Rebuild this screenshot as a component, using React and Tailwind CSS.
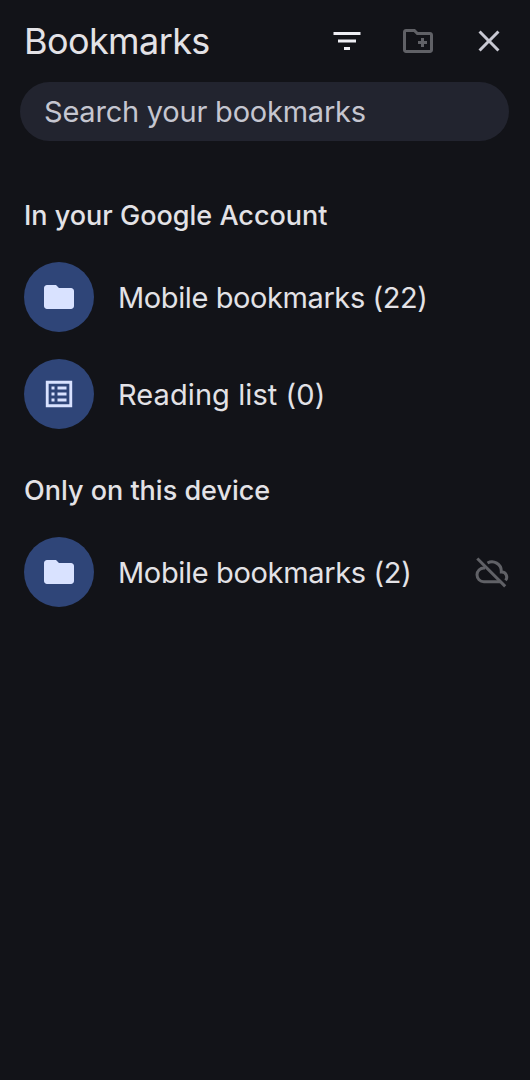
import { MdFilterList, MdOutlineCreateNewFolder, MdClose, MdFolder } from 'react-icons/md';

function ReadingListIcon() {
  return (
    <svg viewBox="0 0 24 24" className="w-9 h-9" fill="currentColor">
      <path fillRule="evenodd" d="M3.2 3.2h17.6v17.6H3.2zM5.1 5.1v13.8h13.8V5.1z" />
      <path d="M7 7h2v2H7zM11 7h6v2h-6zM7 11h2v2H7zM11 11h6v2h-6zM7 15h2v2H7zM11 15h6v2h-6z" />
    </svg>
  );
}

function CloudOffIcon() {
  return (
    <svg
      viewBox="0 0 24 24"
      className="w-9 h-9"
      fill="none"
      stroke="currentColor"
      strokeWidth="2"
    >
      <path d="M2.2 3L20.8 21.6" />
      <path d="M7.4 9.3H6.6A4.6 4.6 0 0 0 6.6 18.5H17.4" />
      <path d="M9 6A6.2 6.2 0 0 1 18.2 11.4V12H18.6A3.4 3.4 0 0 1 21 17.6" />
    </svg>
  );
}

function SectionHeader({ children }) {
  return (
    <h2 className="h-[81px] pt-8 pl-6 text-[27px] leading-[34px] font-medium text-[#e3e2e6] whitespace-nowrap">
      {children}
    </h2>
  );
}

function BookmarkRow({ icon, label, className, trailing }) {
  return (
    <div className="h-[97px] pl-6 pr-5 flex items-center">
      <div className="w-[70px] h-[70px] shrink-0 rounded-full bg-[#2f4578] text-[#d9e2ff] flex items-center justify-center">
        {icon}
      </div>
      <span className="ml-6 pt-0.5 flex-1 text-[29px] leading-9 text-[#e3e2e6] whitespace-nowrap">
        <span className={className}>{label}</span>
      </span>
      {trailing && <div className="text-[#606166]">{trailing}</div>}
    </div>
  );
}

export default function App() {
  return (
    <div className="min-h-screen bg-[#121318] font-['Inter',sans-serif]">
      {/* Toolbar */}
      <header className="h-[82px] pl-6 pr-[23px] flex items-center justify-between">
        <h1 className="text-[36px] leading-[44px] tracking-[-0.6px] text-[#e3e2e6]">
          Bookmarks
        </h1>
        <div className="flex items-center gap-[35px]">
          <MdFilterList className="w-9 h-9 text-[#eeeef3]" />
          <MdOutlineCreateNewFolder className="w-9 h-9 text-[#606166]" />
          <MdClose className="w-9 h-9 text-[#c8c8d2]" />
        </div>
      </header>

      {/* Search */}
      <div className="h-[59px] ml-5 mr-[21px] pl-6 rounded-full bg-[#22242f] flex items-center">
        <span className="text-[29px] leading-9 tracking-[-0.22px] text-[#c5c6d0] whitespace-nowrap">
          Search your bookmarks
        </span>
      </div>

      <main className="pt-[26px]">
        <SectionHeader>In your Google Account</SectionHeader>
        <BookmarkRow
          icon={<MdFolder className="w-9 h-9" />}
          label="Mobile bookmarks (22)"
          className="tracking-[-0.4px]"
        />
        <BookmarkRow
          icon={<ReadingListIcon />}
          label="Reading list (0)"
          className="tracking-[0.08px]"
        />
        <SectionHeader>Only on this device</SectionHeader>
        <BookmarkRow
          icon={<MdFolder className="w-9 h-9" />}
          label="Mobile bookmarks (2)"
          className="tracking-[-0.34px]"
          trailing={<CloudOffIcon />}
        />
      </main>
    </div>
  );
}
